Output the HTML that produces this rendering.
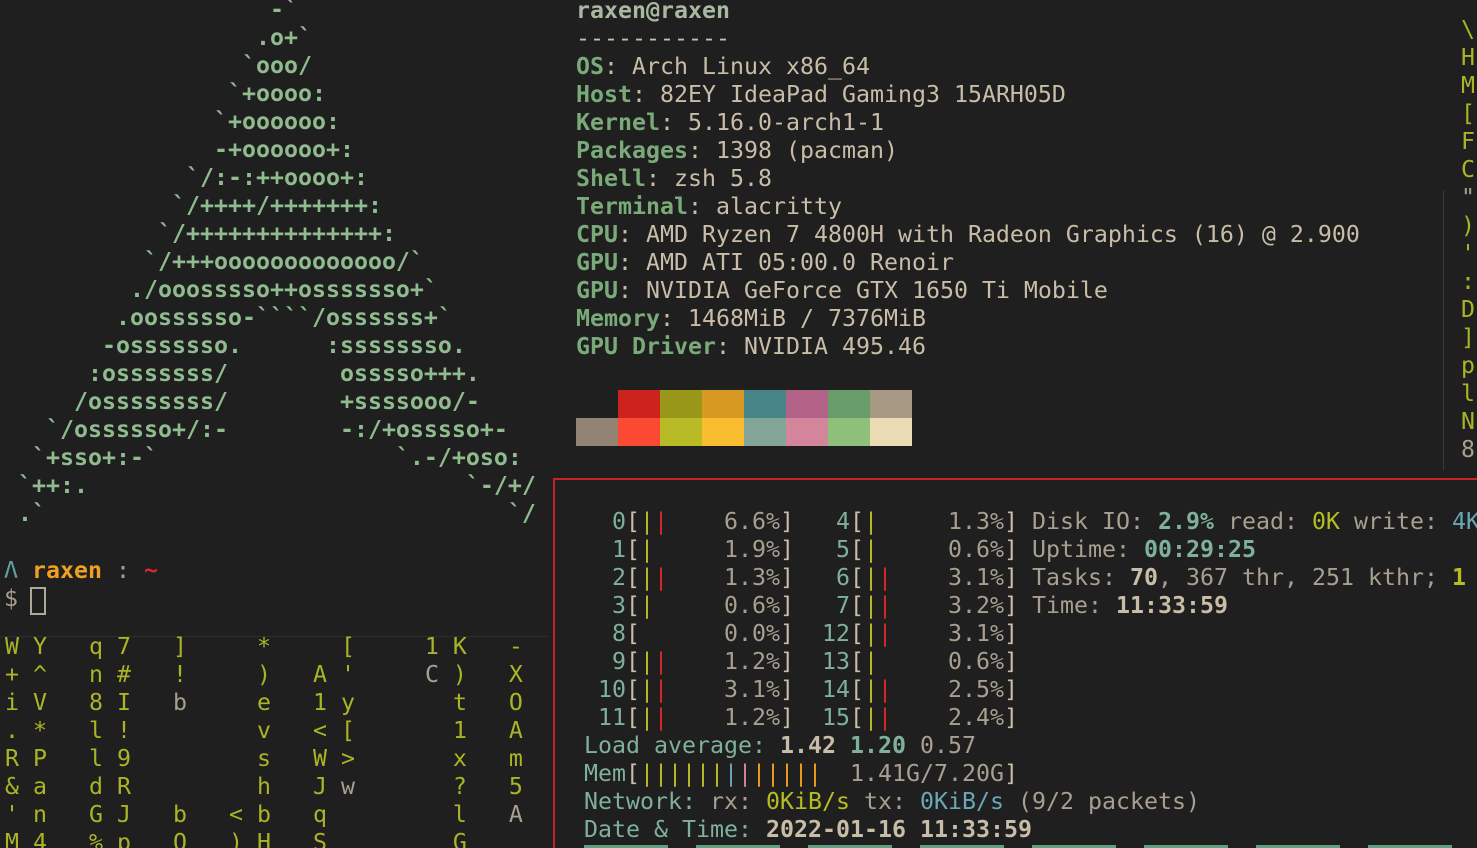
<!DOCTYPE html>
<html><head><meta charset="utf-8"><style>
html,body{margin:0;padding:0;background:#1e1f1e;width:1477px;height:848px;overflow:hidden;position:relative}
.l{position:absolute;white-space:pre;font-family:"DejaVu Sans Mono","Liberation Mono",monospace;font-size:23.25px;line-height:28px;color:#c9bda8}
.a{color:#8fbb8f;font-weight:bold}
.g{color:#7aaa7a;font-weight:bold}
.b{font-weight:bold}
.y{color:#b6bd22}
.r{color:#d8262a}
.t{color:#7fb09a}
.gr{color:#a89f90}
.o{color:#f09a1a}
.pk{color:#d3869b}
.bl{color:#6aa6b6}
.m{color:#aab425}
.sw{position:absolute;width:42px;height:28px}
</style></head><body>
<div class="l a" style="left:18px;top:-4px">                  -&#96;
                 .o+&#96;
                &#96;ooo/
               &#96;+oooo:
              &#96;+oooooo:
              -+oooooo+:
            &#96;/:-:++oooo+:
           &#96;/++++/+++++++:
          &#96;/++++++++++++++:
         &#96;/+++ooooooooooooo/&#96;
        ./ooosssso++osssssso+&#96;
       .oossssso-&#96;&#96;&#96;&#96;/ossssss+&#96;
      -osssssso.      :ssssssso.
     :osssssss/        osssso+++.
    /ossssssss/        +ssssooo/-
  &#96;/ossssso+/:-        -:/+osssso+-
 &#96;+sso+:-&#96;                 &#96;.-/+oso:
&#96;++:.                           &#96;-/+/
.&#96;                                 &#96;/</div>
<div class="l" style="left:576px;top:-3px"><span class="g" style="color:#a9b8a0">raxen@raxen</span>
-----------
<span class="g">OS</span>: Arch Linux x86_64
<span class="g">Host</span>: 82EY IdeaPad Gaming3 15ARH05D
<span class="g">Kernel</span>: 5.16.0-arch1-1
<span class="g">Packages</span>: 1398 (pacman)
<span class="g">Shell</span>: zsh 5.8
<span class="g">Terminal</span>: alacritty
<span class="g">CPU</span>: AMD Ryzen 7 4800H with Radeon Graphics (16) @ 2.900
<span class="g">GPU</span>: AMD ATI 05:00.0 Renoir
<span class="g">GPU</span>: NVIDIA GeForce GTX 1650 Ti Mobile
<span class="g">Memory</span>: 1468MiB / 7376MiB
<span class="g">GPU Driver</span>: NVIDIA 495.46</div>
<div class="sw" style="left:618px;top:390px;background:#cc241d"></div>
<div class="sw" style="left:660px;top:390px;background:#98971a"></div>
<div class="sw" style="left:702px;top:390px;background:#d79921"></div>
<div class="sw" style="left:744px;top:390px;background:#458588"></div>
<div class="sw" style="left:786px;top:390px;background:#b16286"></div>
<div class="sw" style="left:828px;top:390px;background:#689d6a"></div>
<div class="sw" style="left:870px;top:390px;background:#a89984"></div>
<div class="sw" style="left:576px;top:418px;background:#928374"></div>
<div class="sw" style="left:618px;top:418px;background:#fb4934"></div>
<div class="sw" style="left:660px;top:418px;background:#b8bb26"></div>
<div class="sw" style="left:702px;top:418px;background:#fabd2f"></div>
<div class="sw" style="left:744px;top:418px;background:#83a598"></div>
<div class="sw" style="left:786px;top:418px;background:#d3869b"></div>
<div class="sw" style="left:828px;top:418px;background:#8ec07c"></div>
<div class="sw" style="left:870px;top:418px;background:#ebdbb2"></div>
<div class="l m" style="left:1461px;top:16px">\
H
M
[
F
C
<span class="gr">"</span>
)
'
:
D
]
p
l
N
<span class="gr">8</span></div>
<div style="position:absolute;left:1443px;top:190px;width:1px;height:280px;background:#3a3a30"></div>
<div class="l" style="left:4px;top:557px"><span style="color:#5fa0a0">&#923;</span> <span class="b" style="color:#f0a020">raxen</span> <span class="gr">:</span> <span class="r b">~</span>
<span class="gr">$</span></div>
<div style="position:absolute;left:30px;top:587px;width:12px;height:24px;border:2px solid #b0a898"></div>
<div style="position:absolute;left:0;top:636px;width:548px;height:1px;background:#2c2d2c"></div>
<div class="l m" style="left:5px;top:633px">W Y   q 7   ]     *     [     1 K   -
+ ^   n #   !     )   A '     <span class="gr">C</span> )   X
i V   8 I   <span class="gr">b</span>     e   1 y       t   O
. *   l !         v   &lt; [       1   A
R P   l 9         s   W &gt;       x   m
&amp; a   d R         h   J <span class="gr">w</span>       ?   5
' n   G J   b   &lt; b   q         l   <span class="gr">A</span>
M 4   % p   O   ) H   S         G</div>
<div style="position:absolute;left:553px;top:478px;width:930px;height:380px;border:2px solid #c8222a;box-sizing:border-box"></div>
<div class="l" style="left:584px;top:508px"><span class="t">  0</span>[<span class="y">|</span><span class="r">|</span>    <span class="gr">6.6%</span>]   <span class="t">4</span>[<span class="y">|</span>     <span class="gr">1.3%</span>] <span class="gr">Disk IO:</span> <span class="b t">2.9%</span> <span class="gr">read:</span> <span class="y">0K</span> <span class="gr">write:</span> <span class="bl">4K</span>
<span class="t">  1</span>[<span class="y">|</span>     <span class="gr">1.9%</span>]   <span class="t">5</span>[<span class="y">|</span>     <span class="gr">0.6%</span>] <span class="gr">Uptime:</span> <span class="b t">00:29:25</span>
<span class="t">  2</span>[<span class="y">|</span><span class="r">|</span>    <span class="gr">1.3%</span>]   <span class="t">6</span>[<span class="y">|</span><span class="r">|</span>    <span class="gr">3.1%</span>] <span class="gr">Tasks:</span> <span class="b">70</span><span class="gr">, 367 thr, 251 kthr;</span> <span class="b y">1</span>
<span class="t">  3</span>[<span class="y">|</span>     <span class="gr">0.6%</span>]   <span class="t">7</span>[<span class="y">|</span><span class="r">|</span>    <span class="gr">3.2%</span>] <span class="gr">Time:</span> <span class="b">11:33:59</span>
<span class="t">  8</span>[      <span class="gr">0.0%</span>]  <span class="t">12</span>[<span class="y">|</span><span class="r">|</span>    <span class="gr">3.1%</span>]
<span class="t">  9</span>[<span class="y">|</span><span class="r">|</span>    <span class="gr">1.2%</span>]  <span class="t">13</span>[<span class="y">|</span>     <span class="gr">0.6%</span>]
<span class="t"> 10</span>[<span class="y">|</span><span class="r">|</span>    <span class="gr">3.1%</span>]  <span class="t">14</span>[<span class="y">|</span><span class="r">|</span>    <span class="gr">2.5%</span>]
<span class="t"> 11</span>[<span class="y">|</span><span class="r">|</span>    <span class="gr">1.2%</span>]  <span class="t">15</span>[<span class="y">|</span><span class="r">|</span>    <span class="gr">2.4%</span>]
<span class="t">Load average:</span> <span class="b">1.42</span> <span class="b t">1.20</span> <span class="gr">0.57</span>
<span class="t">Mem</span>[<span class="y">||||||</span><span class="bl">|</span><span class="pk">|</span><span class="o">|||||</span>  <span class="gr">1.41G/7.20G</span>]
<span class="t">Network:</span> <span class="gr">rx:</span> <span class="y">0KiB/s</span> <span class="gr">tx:</span> <span class="bl">0KiB/s</span> <span class="gr">(9/2 packets)</span>
<span class="t">Date &amp; Time:</span> <span class="b">2022-01-16 11:33:59</span></div>
<div style="position:absolute;top:845px;left:584px;width:84px;height:3px;background:#5f9f80"></div>
<div style="position:absolute;top:845px;left:696px;width:84px;height:3px;background:#5f9f80"></div>
<div style="position:absolute;top:845px;left:808px;width:84px;height:3px;background:#5f9f80"></div>
<div style="position:absolute;top:845px;left:920px;width:84px;height:3px;background:#5f9f80"></div>
<div style="position:absolute;top:845px;left:1032px;width:84px;height:3px;background:#5f9f80"></div>
<div style="position:absolute;top:845px;left:1144px;width:84px;height:3px;background:#5f9f80"></div>
<div style="position:absolute;top:845px;left:1256px;width:84px;height:3px;background:#5f9f80"></div>
<div style="position:absolute;top:845px;left:1368px;width:84px;height:3px;background:#5f9f80"></div>
</body></html>
